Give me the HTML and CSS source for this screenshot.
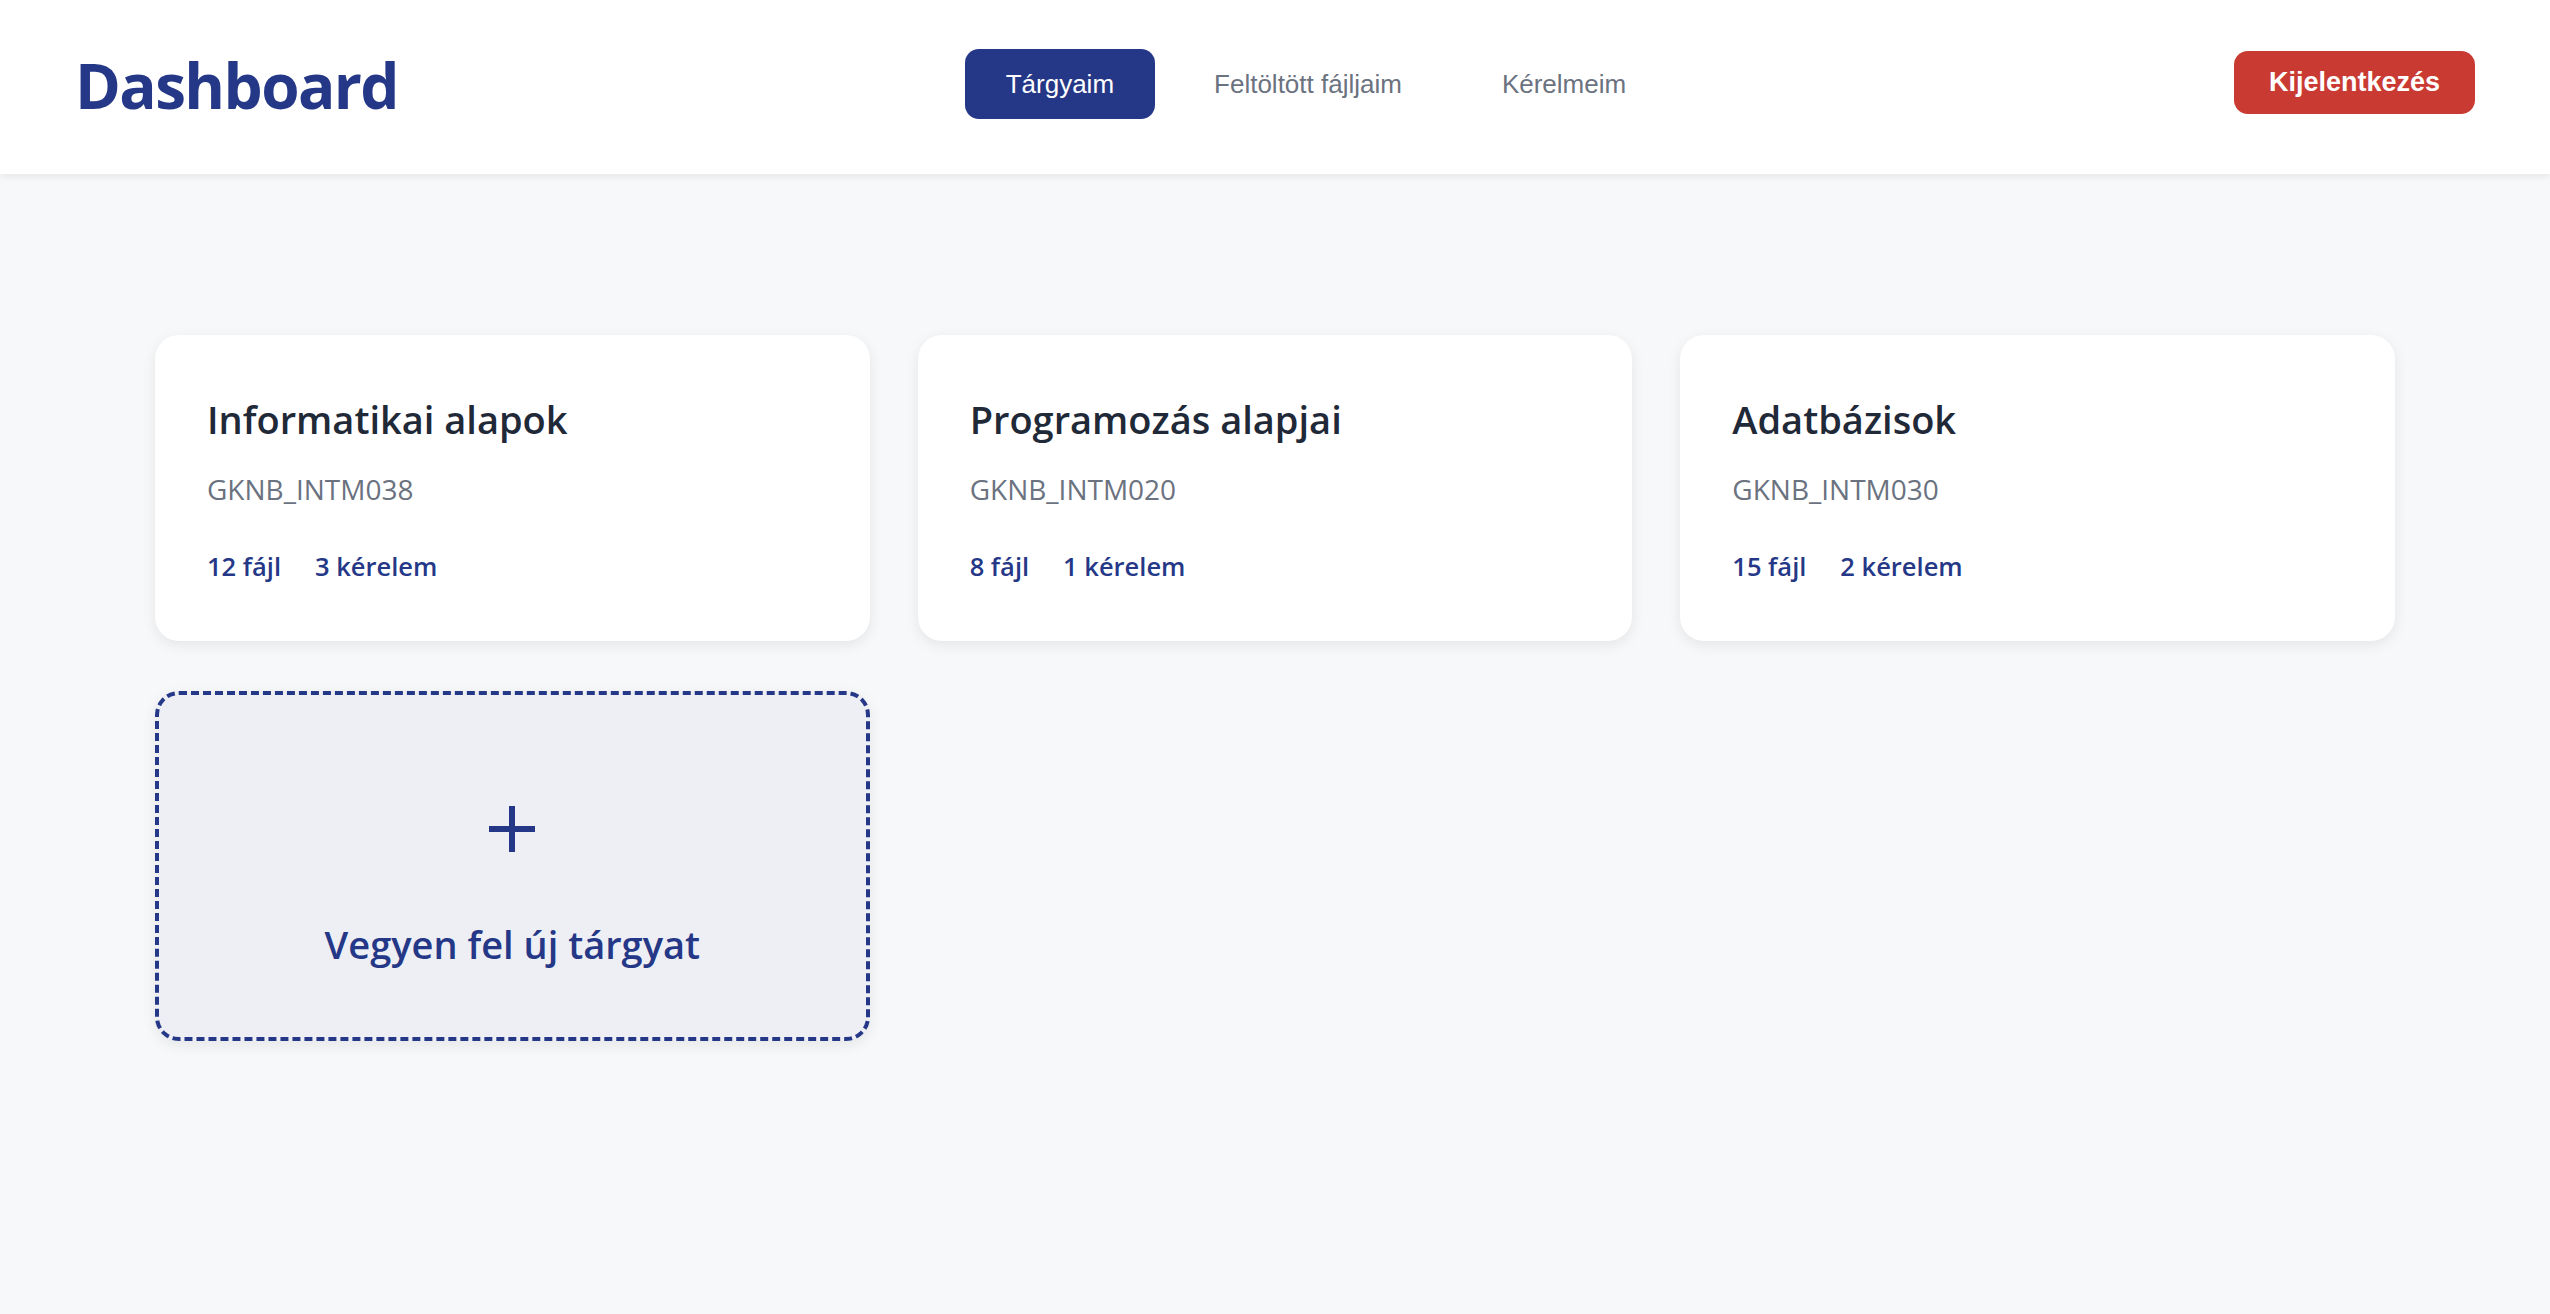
FILE: index.html
```html
<!DOCTYPE html>
<html lang="hu">
<head>
<meta charset="utf-8">
<title>Dashboard</title>
<link rel="stylesheet" href="styles.css">
</head>
<body>
<header class="topbar">
  <h1 class="brand">Dashboard</h1>
  <nav class="nav">
    <a class="nav-link active" href="#">Tárgyaim</a>
    <a class="nav-link" href="#">Feltöltött fájljaim</a>
    <a class="nav-link" href="#">Kérelmeim</a>
  </nav>
  <button class="logout" type="button">Kijelentkezés</button>
</header>
<main class="main">
  <section class="grid">
    <article class="card">
      <h2 class="card-title">Informatikai alapok</h2>
      <p class="card-code">GKNB_INTM038</p>
      <div class="card-stats"><span>12 fájl</span><span>3 kérelem</span></div>
    </article>
    <article class="card">
      <h2 class="card-title">Programozás alapjai</h2>
      <p class="card-code">GKNB_INTM020</p>
      <div class="card-stats"><span>8 fájl</span><span>1 kérelem</span></div>
    </article>
    <article class="card">
      <h2 class="card-title">Adatbázisok</h2>
      <p class="card-code">GKNB_INTM030</p>
      <div class="card-stats"><span>15 fájl</span><span>2 kérelem</span></div>
    </article>
    <article class="card add-card">
      <svg class="plus" width="46" height="46" viewBox="0 0 46 46" aria-hidden="true">
        <rect x="0" y="20" width="46" height="6" fill="#253887"/>
        <rect x="20" y="0" width="6" height="46" fill="#253887"/>
      </svg>
      <p class="add-label">Vegyen fel új tárgyat</p>
    </article>
  </section>
</main>
</body>
</html>
```
FILE: styles.css
```css
* { box-sizing: border-box; }
html, body { margin: 0; padding: 0; }
body {
  background: #f7f8fa;
  font-family: "Open Sans", "Noto Sans", sans-serif;
  min-height: 1314px;
}
.topbar {
  height: 174px;
  background: #ffffff;
  box-shadow: 0 2px 8px rgba(0, 0, 0, 0.08);
  display: flex;
  align-items: center;
  justify-content: space-between;
  padding: 0 75px;
  position: relative;
  z-index: 1;
}
.brand {
  margin: 0 0 4px 0;
  font-size: 62px;
  line-height: 1.2;
  font-weight: 700;
  letter-spacing: -1.6px;
  color: #253887;
}
.nav {
  display: flex;
  gap: 18px;
  margin-bottom: 7px;
}
.nav-link {
  font-family: "Liberation Sans", Arial, sans-serif;
  font-size: 26px;
  line-height: 30px;
  padding: 20px 41px;
  border-radius: 14px;
  color: #6b7280;
  text-decoration: none;
}
.nav-link.active {
  background: #253887;
  color: #ffffff;
}
.logout {
  font-family: "Liberation Sans", Arial, sans-serif;
  font-size: 27px;
  font-weight: 700;
  line-height: 31px;
  padding: 16px 35px;
  border: none;
  border-radius: 14px;
  background: #c93a32;
  color: #ffffff;
  margin-bottom: 9px;
}
.main {
  padding: 161px 155px 80px;
}
.grid {
  display: grid;
  grid-template-columns: repeat(3, 1fr);
  gap: 50px 48px;
}
.card {
  background: #ffffff;
  border-radius: 24px;
  box-shadow: 0 4px 14px rgba(0, 0, 0, 0.08);
  padding: 62px 52px 59px;
}
.card-title {
  margin: 0;
  font-size: 38px;
  line-height: 1.2;
  font-weight: 600;
  color: #1f2937;
}
.card-code {
  margin: 30px 0 0;
  font-size: 28px;
  line-height: 1.2;
  color: #6b7280;
}
.card-stats {
  margin-top: 45px;
  display: flex;
  gap: 34px;
  font-size: 25.5px;
  line-height: 1.2;
  font-weight: 600;
  color: #253887;
}
.add-card {
  background: #eeeff5;
  border: 4px dashed #253887;
  display: flex;
  flex-direction: column;
  align-items: center;
  padding: 111px 52px 70px;
}
.plus { display: block; }
.add-label {
  margin: 70px 0 0;
  font-size: 38px;
  line-height: 1.2;
  font-weight: 600;
  color: #253887;
}
```
